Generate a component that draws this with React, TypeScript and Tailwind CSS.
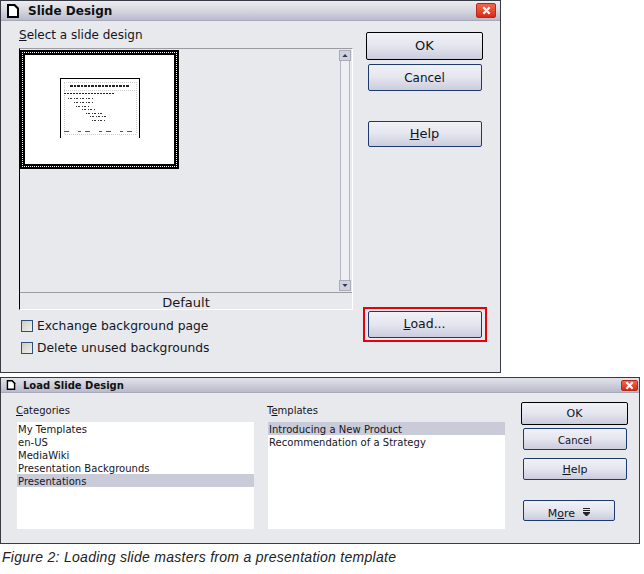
import { ReactNode } from "react";

const face = "font-['DejaVu_Sans',sans-serif]";

function PageIcon({ className }: { className: string }) {
  return (
    <svg viewBox="0 0 12 14" className={className}>
      <path d="M1 1h6.5L11 4.5V13H1z" fill="#fff" stroke="#000" strokeWidth="2" />
      <path d="M7 0.5l5 5" stroke="#000" strokeWidth="1.5" />
    </svg>
  );
}

function CloseButton({ className }: { className: string }) {
  return (
    <div className={`flex items-center justify-center rounded-[2px] border border-[#b5291c] bg-gradient-to-b from-[#f2664e] to-[#d8260f] ${className}`}>
      <svg viewBox="0 0 10 10" className="h-[9px] w-[9px]">
        <path d="M1.5 1.5l7 7M8.5 1.5l-7 7" stroke="#fff" strokeWidth="2.4" />
      </svg>
    </div>
  );
}

function Btn({ className, children }: { className: string; children: ReactNode }) {
  return (
    <div className={`flex items-center justify-center rounded-[2px] border border-[#1d3a70] bg-gradient-to-b from-[#f1f2f7] via-[#e4e5ee] to-[#cbcddd] text-[#10131f] ${className}`}>
      {children}
    </div>
  );
}

function Check({ label }: { label: string }) {
  return (
    <div className="flex h-[22px] items-center">
      <div className="h-[12px] w-[12px] border border-[#2c4f7c] bg-gradient-to-br from-[#cfccc2] to-[#f2f1ec]" />
      <span className="ml-[4px] pt-[1px] text-[12.3px] text-[#15151f]">{label}</span>
    </div>
  );
}

function ScrollArrow({ up }: { up: boolean }) {
  return (
    <div className="flex h-[11px] items-center justify-center border border-[#a9abb8] bg-[#cfd1dc]">
      <svg viewBox="0 0 7 4" className="h-[3px] w-[6px]">
        <path d={up ? "M0 4l3.5-4 3.5 4z" : "M0 0l3.5 4 3.5-4z"} fill="#2e3a5c" />
      </svg>
    </div>
  );
}

function Thumbnail() {
  return (
    <div className="h-[119px] w-[159px] border-2 border-black">
      <div className="h-full w-full border border-dotted border-white bg-black">
        <div className="flex h-full w-full justify-center border-2 border-black bg-white pt-[23px]">
          <svg viewBox="0 0 80 60" className="h-[60px] w-[80px]" shapeRendering="crispEdges">
            <path d="M0.5 60V0.5h79V60" fill="none" stroke="#000" />
            <rect x="4" y="4" width="72" height="52" fill="none" stroke="#ccc" strokeDasharray="1 1" />
            <line x1="4" y1="12.5" x2="76" y2="12.5" stroke="#ccc" strokeDasharray="1 1" />
            <path d="M10 7.5h60" stroke="#222" strokeWidth="2" strokeDasharray="3 1 2 1" />
            <path d="M4 15.5h50" stroke="#222" strokeWidth="1.5" strokeDasharray="2 1" />
            <path d="M8 20.5h26M14 24.5h20M16 28h14M22 31.5h14M26 35h16M30 38.5h16M32 42h14" stroke="#333" strokeDasharray="1 1 2 2" />
            <path d="M4 53.5h72" stroke="#555" strokeDasharray="5 9 3 4" />
          </svg>
        </div>
      </div>
    </div>
  );
}

function ListBox({ rows, selected }: { rows: string[]; selected: number }) {
  return (
    <div className="h-[107px] w-[237px] bg-white text-[10px] leading-[13px] tracking-[0.03px] text-[#15151f]">
      {rows.map((row, i) => (
        <div key={row} className={`h-[13px] pl-[1px] ${i === selected ? "bg-[#c9cbd9]" : ""}`}>
          <div className="translate-y-[1px]">{row}</div>
        </div>
      ))}
    </div>
  );
}

export default function App() {
  return (
    <div className={`h-[574px] w-[644px] overflow-hidden bg-white ${face}`}>
      {/* Slide Design dialog */}
      <div className="flex h-[373px] w-[501px] flex-col border border-[#3a3a44] bg-[#e8e9ec]">
        <div className="flex h-[20px] shrink-0 items-center border-b border-[#a8a9b8] bg-gradient-to-b from-[#ecedf0] via-[#d6d7e0] to-[#b9bbcd] pl-[6px] pr-[4px]">
          <PageIcon className="h-[14px] w-[12px]" />
          <span className="ml-[9px] text-[12px] font-bold text-[#111]">Slide Design</span>
          <CloseButton className="ml-auto h-[15px] w-[20px]" />
        </div>
        <div className="flex flex-1">
          <div className="ml-[18px] flex w-[334px] flex-col">
            <div className="mt-[6px] h-[21px] text-[12px] leading-[16px] text-[#15151f]">
              <span className="underline">S</span>elect a slide design
            </div>
            <div className="flex h-[262px] flex-col border-l border-t border-r border-b border-t-[#9a9aa2] border-l-black border-r-white border-b-white">
              <div className="flex flex-1 pt-[1px]">
                <Thumbnail />
                <div className="ml-auto mr-[1px] flex h-[241px] w-[12px] flex-col">
                  <ScrollArrow up />
                  <div className="mx-[1px] flex-1 border-x border-[#b4b6c4] bg-[#eeeef3]" />
                  <ScrollArrow up={false} />
                </div>
              </div>
              <div className="h-[17px] border-t border-[#9a9aa2] pt-[1px] text-center text-[13px] leading-[18px] text-[#15151f]">
                Default
              </div>
            </div>
            <div className="ml-[2px] mt-[5px]">
              <Check label="Exchange background page" />
              <Check label="Delete unused backgrounds" />
            </div>
          </div>
          <div className="ml-[13px] flex w-[117px] flex-col items-center pt-[11px] text-[13px]">
            <Btn className="h-[28px] w-[117px] border-black">OK</Btn>
            <Btn className="mt-[4px] h-[27px] w-[114px] text-[12px]">Cancel</Btn>
            <Btn className="mt-[30px] h-[26px] w-[114px]">
              <span className="underline">H</span>elp
            </Btn>
            <div className="relative mt-[164px]">
              <Btn className="h-[27px] w-[114px] text-[12.5px]">
                <span className="underline">L</span>oad...
              </Btn>
              <div className="absolute -inset-x-[5px] -inset-y-[4px] border-2 border-[#e8000a]" />
            </div>
          </div>
        </div>
      </div>

      {/* Load Slide Design dialog */}
      <div className="mt-[4px] flex h-[167px] w-[640px] flex-col border border-[#3a3a44] bg-[#e8e9ec]">
        <div className="flex h-[15px] shrink-0 items-center border-b border-[#a8a9b8] bg-gradient-to-b from-[#e2e3e9] to-[#b9bbcd] pl-[5px] pr-[1px]">
          <PageIcon className="h-[10px] w-[10px]" />
          <span className="ml-[7px] text-[10px] font-bold text-[#111]">Load Slide Design</span>
          <CloseButton className="ml-auto h-[11px] w-[17px]" />
        </div>
        <div className="flex flex-1 text-[10px] text-[#15151f]">
          <div className="ml-[15px] mt-[11px]">
            <div className="h-[18px] leading-[14px]">
              <span className="underline">C</span>ategories
            </div>
            <div className="ml-[1px]">
              <ListBox
                rows={["My Templates", "en-US", "MediaWiki", "Presentation Backgrounds", "Presentations"]}
                selected={4}
              />
            </div>
          </div>
          <div className="ml-[13px] mt-[11px]">
            <div className="h-[18px] leading-[14px]">
              T<span className="underline">e</span>mplates
            </div>
            <div className="ml-[1px]">
              <ListBox rows={["Introducing a New Product", "Recommendation of a Strategy"]} selected={0} />
            </div>
          </div>
          <div className="ml-[16px] flex w-[107px] flex-col items-start pt-[9px]">
            <Btn className="h-[23px] w-[107px] border-black pt-[2px] text-[11px]">OK</Btn>
            <Btn className="ml-[2px] mt-[3px] h-[22px] w-[104px] pt-[2px]">Cancel</Btn>
            <Btn className="ml-[2px] mt-[8px] h-[22px] w-[104px] pt-[3px] text-[11px]">
              <span className="underline">H</span>elp
            </Btn>
            <Btn className="ml-[2px] mt-[20px] h-[21px] w-[92px] pt-[7px] text-[11px]">
              M<span className="underline">o</span>re
              <svg viewBox="0 0 7 8" className="ml-[8px] h-[8px] w-[7px] -translate-y-[2px]">
                <path d="M0 0.5h7M0 2.5h7M0 4.5h7l-3.5 3.5z" stroke="#222" strokeWidth="1" fill="#222" />
              </svg>
            </Btn>
          </div>
        </div>
      </div>

      <p className="ml-[2px] mt-[5px] font-['Liberation_Sans',sans-serif] text-[14px] italic leading-[16px] tracking-[0.28px] text-[#222]">
        Figure 2: Loading slide masters from a presentation template
      </p>
    </div>
  );
}
